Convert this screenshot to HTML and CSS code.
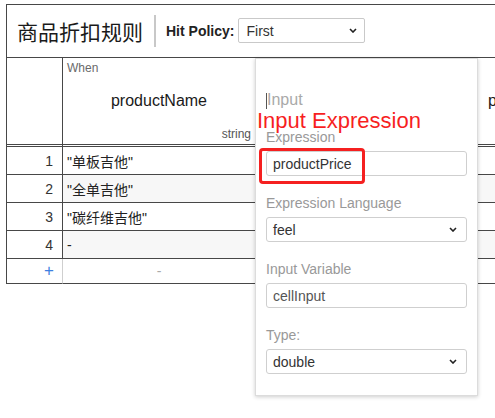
FILE: index.html
```html
<!DOCTYPE html>
<html lang="zh">
<head>
<meta charset="utf-8">
<title>商品折扣规则</title>
<link rel="stylesheet" href="styles.css">
</head>
<body>
<div class="frame">
  <div class="titlebar">
    <h1 class="title">商品折扣规则</h1>
    <span class="sep"></span>
    <span class="hp-label">Hit Policy:</span>
    <div class="select hp-select"><span>First</span><svg class="chev" width="8" height="5" viewBox="0 0 8 5"><polyline points="1,1 4,4 7,1"/></svg></div>
  </div>
  <div class="grid">
    <div class="cell num head"></div>
    <div class="cell head">
      <div class="clause">When</div>
      <div class="expr">productName</div>
      <div class="type">string</div>
    </div>
    <div class="cell head">
      <div class="clause">When</div>
      <div class="expr">productPrice</div>
      <div class="type"></div>
    </div>
    <div class="cell head rest"></div>

    <div class="cell num">1</div>
    <div class="cell">"单板吉他"</div>
    <div class="cell"></div>
    <div class="cell rest"></div>

    <div class="cell num">2</div>
    <div class="cell alt">"全单吉他"</div>
    <div class="cell alt"></div>
    <div class="cell alt rest"></div>

    <div class="cell num">3</div>
    <div class="cell">"碳纤维吉他"</div>
    <div class="cell"></div>
    <div class="cell rest"></div>

    <div class="cell num">4</div>
    <div class="cell alt">-</div>
    <div class="cell alt"></div>
    <div class="cell alt rest"></div>

    <div class="cell num add">+</div>
    <div class="cell addcell">-</div>
    <div class="cell addcell"></div>
    <div class="cell addcell rest"></div>
  </div>
</div>

<div class="popup">
  <div class="popup-title"><span class="caret"></span><span class="ph">Input</span></div>
  <div class="field">
    <div class="flabel">Expression</div>
    <div class="control val-dark">productPrice</div>
  </div>
  <div class="field">
    <div class="flabel">Expression Language</div>
    <div class="control select-ctl val-dark"><span>feel</span><svg class="chev" width="8" height="5" viewBox="0 0 8 5"><polyline points="1,1 4,4 7,1"/></svg></div>
  </div>
  <div class="field">
    <div class="flabel">Input Variable</div>
    <div class="control val-mid">cellInput</div>
  </div>
  <div class="field">
    <div class="flabel">Type:</div>
    <div class="control select-ctl val-dark"><span>double</span><svg class="chev" width="8" height="5" viewBox="0 0 8 5"><polyline points="1,1 4,4 7,1"/></svg></div>
  </div>
</div>

<div class="annot-label">Input Expression</div>
<div class="annot-box"></div>
</body>
</html>
```

FILE: styles.css
```css
html, body {
  margin: 0;
  overflow: hidden;
}
body {
  padding: 4px 0 0 6px;
  background: #fff;
  font-family: "Liberation Sans", Arial, "Noto Sans CJK SC", sans-serif;
  color: #222;
  position: relative;
  width: 495px;
  height: 418px;
  box-sizing: border-box;
}

.frame {
  width: 1200px;
  border-top: 1px solid #474747;
  border-left: 1px solid #474747;
}

.titlebar {
  height: 52px;
  border-bottom: 1px solid #474747;
  display: flex;
  align-items: center;
  padding-left: 10px;
}
.title {
  margin: 0;
  font-family: "Noto Sans CJK SC", "Noto Sans CJK TC", sans-serif;
  font-weight: 400;
  font-size: 21px;
  line-height: 26px;
  color: #1a1a1a;
}
.sep {
  width: 2px;
  height: 32px;
  background: #c8c8c8;
  margin-left: 11px;
  margin-right: 10px;
}
.hp-label {
  font-weight: 700;
  font-size: 14px;
  color: #222;
  margin-right: 4px;
}
.select {
  display: flex;
  align-items: center;
  justify-content: space-between;
  box-sizing: border-box;
  border: 1px solid #c9c9c9;
  border-radius: 2px;
  font-size: 14px;
  color: #333;
}
.hp-select {
  width: 127px;
  height: 25px;
  padding: 0 7px 0 7px;
  margin-top: -1px;
}
.chev polyline {
  fill: none;
  stroke: #222;
  stroke-width: 1.6;
}

.grid {
  display: grid;
  grid-template-columns: 56px 193px 555px 1fr;
  grid-template-rows: 89px 28px 28px 28px 28px 25px;
  font-size: 14px;
}
.cell {
  box-sizing: border-box;
  border-right: 1px solid #474747;
  border-bottom: 1px solid #474747;
  display: flex;
  align-items: center;
  padding: 0 4px;
  color: #222;
  font-family: "Liberation Sans", Arial, "Noto Sans CJK SC", sans-serif;
}
.cell.rest {
  border-right: none;
}
.cell.num {
  justify-content: flex-end;
  padding-right: 9px;
  color: #333;
}
.cell.alt {
  background: #f7f7f7;
}
.cell.head {
  border-bottom: 3px double #474747;
  flex-direction: column;
  align-items: stretch;
  padding: 3px 4px 0 4px;
}
.clause {
  font-size: 12px;
  line-height: 14px;
  color: #6a6a6a;
}
.expr {
  margin-top: 17px;
  font-size: 16px;
  line-height: 18px;
  text-align: center;
  color: #1a1a1a;
}
.type {
  margin-top: 17px;
  font-size: 12px;
  line-height: 14px;
  height: 14px;
  text-align: right;
  color: #555;
}
.cell.add {
  color: #3d7fe0;
  font-size: 17px;
  padding-right: 8px;
  border-right-color: #cfcfcf;
}
.cell.addcell {
  justify-content: center;
  color: #aaa;
}

.popup {
  position: absolute;
  left: 255px;
  top: 58px;
  width: 223px;
  height: 338px;
  box-sizing: border-box;
  background: #fff;
  border: 1px solid #dcdcdc;
  box-shadow: 0 1px 4px rgba(0, 0, 0, 0.2);
  padding: 32px 10px 20px 10px;
  z-index: 2;
}
.popup-title {
  display: flex;
  align-items: center;
  height: 18px;
  font-size: 16px;
  line-height: 18px;
}
.caret {
  width: 1px;
  height: 16px;
  background: #555;
  margin-top: 2px;
}
.ph {
  color: #a9a9a9;
}
.field {
  margin-top: 20px;
}
.field + .field {
  margin-top: 19px;
}
.flabel {
  font-size: 14px;
  line-height: 16px;
  color: #999;
  margin-bottom: 6px;
}
.control {
  box-sizing: border-box;
  height: 25px;
  border: 1px solid #cfcfcf;
  border-radius: 3px;
  padding: 0 9px 0 6px;
  font-size: 14px;
  display: flex;
  align-items: center;
}
.select-ctl {
  justify-content: space-between;
}
.val-dark {
  color: #333;
}
.val-mid {
  color: #555;
}

.annot-label {
  position: absolute;
  left: 257px;
  top: 110px;
  font-family: "Liberation Sans", Arial, sans-serif;
  font-size: 22px;
  line-height: 22px;
  color: #f71f1f;
  z-index: 3;
  white-space: nowrap;
}
.annot-box {
  position: absolute;
  left: 259px;
  top: 148px;
  width: 106px;
  height: 36px;
  box-sizing: border-box;
  border: 3px solid #f52020;
  border-radius: 4px;
  z-index: 3;
}
```
